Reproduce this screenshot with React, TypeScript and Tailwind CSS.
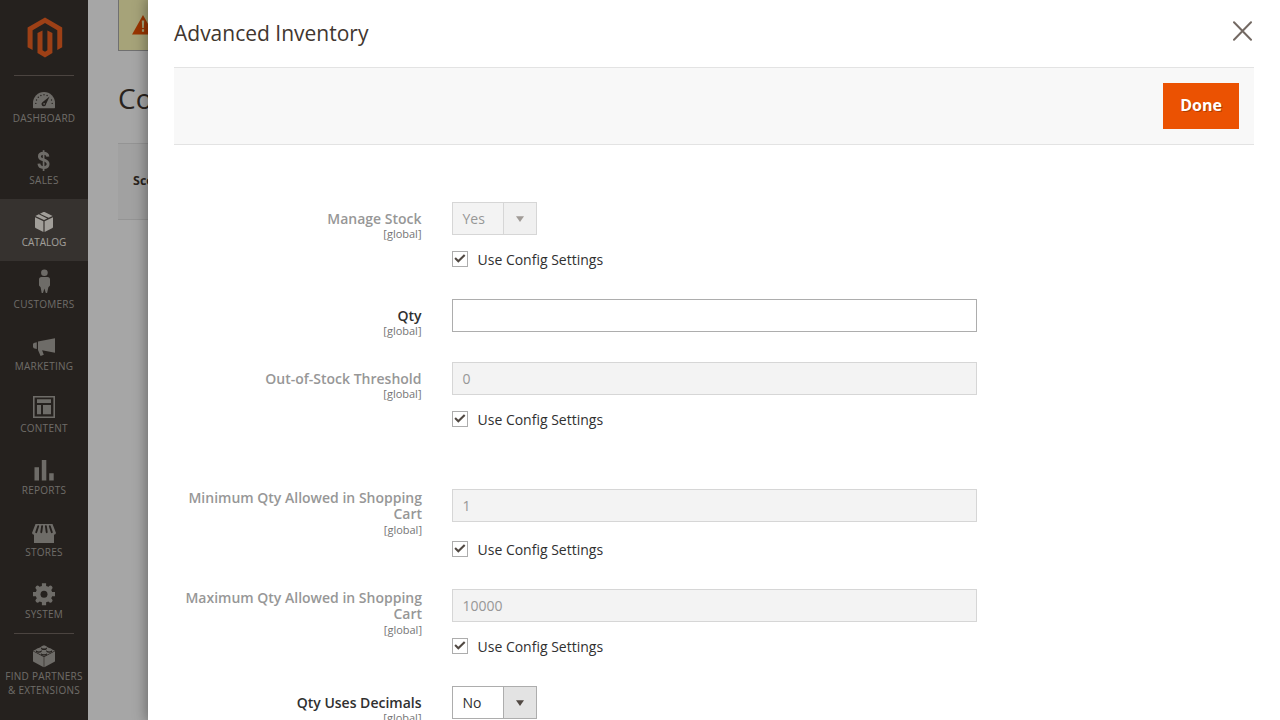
import type { ReactNode } from "react";

type MenuItem = { label: ReactNode; icon: ReactNode; active?: boolean; divided?: boolean };

const menu: MenuItem[] = [
  {
    label: "Dashboard",
    divided: true,
    icon: (
      <>
        <path d="M33 32.6V28a11 11 0 0 1 22 0v4.6q0 .6-.6.6H33.6q-.6 0-.6-.6Z" />
        <g fill="#3a342f">
          <circle cx="35.8" cy="28.4" r=".7" />
          <circle cx="36.5" cy="25" r=".7" />
          <circle cx="38.3" cy="22.3" r=".7" />
          <circle cx="40.9" cy="20.5" r=".7" />
          <circle cx="44" cy="19.8" r=".7" />
          <circle cx="47.1" cy="20.5" r=".7" />
          <circle cx="51.5" cy="25" r=".7" />
          <circle cx="52.2" cy="28.4" r=".7" />
          <path d="M49.6 21.4 46.1 29A2.3 2.3 0 1 1 42.7 27Z" />
        </g>
        <circle cx="44.1" cy="28.9" r=".8" />
      </>
    ),
  },
  {
    label: "Sales",
    icon: (
      <g fill="none" stroke="currentColor">
        <path
          d="M47.9 19.6C47.6 17.3 46.2 16.3 43.6 16.3 41 16.3 39.4 17.4 39.4 19.4 39.4 21.7 41.4 22.3 43.6 22.9 46.1 23.6 48.1 24.3 48.1 27 48.1 29.5 46.2 30.6 43.7 30.6 41 30.6 39.2 29.4 38.9 26.7"
          strokeWidth="2.9"
        />
        <path d="M43.6 13.2V34" strokeWidth="1.7" />
      </g>
    ),
  },
  {
    label: "Catalog",
    active: true,
    icon: (
      <>
        <path d="M35 18.2 43.4 22.2V33L35.5 28.9Q35 28.6 35 28ZM53 18.2 44.6 22.2V33L52.5 28.9Q53 28.6 53 28Z" />
        <path d="M35.4 17 38.8 15.3 47.2 19.4 44 21.1ZM40 14.7 43.4 13Q44 12.8 44.6 13L52.6 17 48.6 18.8Z" />
      </>
    ),
  },
  {
    label: "Customers",
    icon: (
      <>
        <circle cx="44.4" cy="11.7" r="3.3" />
        <path d="M41.5 16H47.5Q50 16 50 18.6V24.5L48.4 26.2 47.1 32H45.8L44.4 27.5 43 32H41.7L40.6 26.2 39 24.5V18.6Q39 16 41.5 16Z" />
      </>
    ),
  },
  {
    label: "Marketing",
    icon: (
      <path d="M55 15.2V29.8L42.1 27.2 43.8 31.8 40.6 33 38 27V18.5ZM36.8 19.2V25.9L33.8 25.2 33 24V21L33.8 19.9Z" />
    ),
  },
  {
    label: "Content",
    icon: (
      <>
        <path d="M33 11H55V33H33ZM34.6 12.6V31.4H53.4V12.6Z" fillRule="evenodd" />
        <path d="M37 14.3H51V18H37ZM37 20H41V29.2H37ZM43 20H51V29.2H43Z" />
      </>
    ),
  },
  {
    label: "Reports",
    icon: <path d="M34.5 20.2H39V33.6H34.5ZM41.8 13H46.3V33.6H41.8ZM49.2 26.2H53.7V33.6H49.2Z" />,
  },
  {
    label: "Stores",
    icon: (
      <>
        <path d="M35.5 15H52.5L56 24Q55.6 25.8 54 25.8V34H34V25.8Q32.4 25.8 32 24Z" />
        <path
          d="M38.2 17.2 36.2 23.2M42.1 17.2 41.3 23.2M45.9 17.2 46.7 23.2M49.8 17.2 51.8 23.2"
          fill="none"
          stroke="#3a342f"
          strokeLinecap="round"
          strokeWidth="1.9"
        />
      </>
    ),
  },
  {
    label: "System",
    icon: (
      <>
        <circle cx="44" cy="23.2" r="8.4" />
        <path
          d="M44 12.2V34.2M33 23.2H55"
          fill="none"
          stroke="currentColor"
          strokeWidth="4.2"
        />
        <path
          d="M37.6 16.8 50.4 29.6M50.4 16.8 37.6 29.6"
          fill="none"
          stroke="currentColor"
          strokeLinecap="round"
          strokeWidth="4.2"
        />
        <circle cx="44" cy="23.2" r="3.5" fill="#3a342f" />
      </>
    ),
  },
  {
    label: (
      <>
        Find Partners
        <br />
        &amp; Extensions
      </>
    ),
    divided: true,
    icon: (
      <>
        <path d="M33 18.3 43.7 23.9V34.2L33.5 28.8Q33 28.5 33 28ZM55 18.3 44.3 23.9V34.2L54.5 28.8Q55 28.5 55 28Z" />
        <path d="M33.2 17.7 44 12.6 54.8 17.7 44 23.3Z" />
        <g fill="#3a342f">
          <ellipse cx="44" cy="15.4" rx="3" ry="1.6" />
          <ellipse cx="38.8" cy="18.1" rx="3" ry="1.6" />
          <ellipse cx="49.2" cy="18.1" rx="3" ry="1.6" />
          <ellipse cx="44" cy="21" rx="3" ry="1.6" />
        </g>
        <ellipse cx="44" cy="14" rx="2.8" ry="1.6" />
        <ellipse cx="38.8" cy="16.8" rx="2.8" ry="1.6" />
        <ellipse cx="49.2" cy="16.8" rx="2.8" ry="1.6" />
        <ellipse cx="44" cy="19.7" rx="2.8" ry="1.6" />
      </>
    ),
  },
];

function Sidebar() {
  return (
    <nav className="h-full w-[88px] shrink-0 bg-[#3a342f]">
      <div className="flex h-[75px] justify-center pt-[17px] pl-px">
        <svg className="h-[41px] w-[36px]" viewBox="0 0 36 41" fill="#f26322">
          <path d="M18 .5 35.2 10.4V30.2L30.3 33V13.2L18 6.1 5.6 13.2V33L.6 30.2V10.4Z" />
          <path d="M15.5 13.4V33.2L18 34.7 20.4 33.2V13.4L25.4 16.1V36L18 40.4 10.5 36V16.1Z" />
        </svg>
      </div>
      {menu.map((item, i) => (
        <div
          key={i}
          className={
            item.active
              ? "relative h-[62px] bg-[#544d49] pt-[6px] text-[#f7f3eb]"
              : "relative h-[62px] pt-[6px] text-[#aaa6a0]"
          }
        >
          {item.divided && <div className="absolute top-0 left-[14px] h-px w-[60px] bg-[#736963]" />}
          <svg className="mx-auto block h-[30px] w-[30px]" viewBox="29 6 30 30" fill="currentColor">
            {item.icon}
          </svg>
          <div
            className={
              item.active
                ? "text-center text-[10px] leading-[14px] whitespace-nowrap uppercase"
                : "text-center text-[10px] leading-[14px] tracking-[0.25px] whitespace-nowrap uppercase"
            }
          >
            {item.label}
          </div>
        </div>
      ))}
    </nav>
  );
}

function PageBehind() {
  return (
    <main className="flex-1 bg-white pl-[30px]">
      <div className="flex h-[51px] items-center border-b border-l border-[#adadad] bg-[#fffbbb] pl-[13px]">
        <svg className="mb-px h-[20px] w-[22px]" viewBox="0 0 22 20">
          <path d="M11 0 22 19.5H0Z" fill="#eb5202" />
          <path d="M9.8 5.5H12.2L11.8 13H10.2ZM9.9 14.3H12.1V16.8H9.9Z" fill="#fffbbb" />
        </svg>
      </div>
      <h1 className="mt-[27px] text-[28px] leading-[40px] whitespace-nowrap text-[#41362f]">Configuration</h1>
      <div className="mt-[25px] flex h-[77px] items-center border-y border-[#e3e3e3] bg-[#f8f8f8] pl-[15px] text-[12.5px] font-bold whitespace-nowrap text-[#41362f]">
        Scope:
      </div>
    </main>
  );
}

function Label({ text, disabled, wrap }: { text: string; disabled?: boolean; wrap?: boolean }) {
  return (
    <div className={wrap ? "w-[248px] pt-px text-right" : "w-[248px] pt-[9px] pr-[0.5px] text-right"}>
      <div
        className={
          disabled
            ? "text-[14px] leading-[16px] font-semibold text-[#979797]"
            : "text-[14px] leading-[16px] font-semibold text-[#303030]"
        }
      >
        {text}
      </div>
      <div
        className={
          wrap ? "text-[11px] leading-[15px] text-[#757575]" : "text-[11px] leading-[13px] text-[#757575]"
        }
      >
        [global]
      </div>
    </div>
  );
}

function TextInput({ value, disabled }: { value?: string; disabled?: boolean }) {
  return (
    <div
      className={
        disabled
          ? "flex h-[33px] w-[525px] items-center border border-[#d6d6d6] bg-[#f3f3f3] px-[9.5px] text-[14px] text-[#979797]"
          : "flex h-[33px] w-[525px] items-center border border-[#adadad] bg-white px-[9.5px] text-[14px] text-[#303030]"
      }
    >
      {value}
    </div>
  );
}

function Select({ value, disabled }: { value: string; disabled?: boolean }) {
  return (
    <div
      className={
        disabled
          ? "flex h-[33px] w-[85px] border border-[#d6d6d6] bg-[#f3f3f3] text-[14px] text-[#979797]"
          : "flex h-[33px] w-[85px] border border-[#adadad] bg-white text-[14px] text-[#303030]"
      }
    >
      <span className="flex flex-1 items-center pl-[9.5px]">{value}</span>
      <span
        className={
          disabled
            ? "flex w-[33px] items-center justify-center border-l border-[#d6d6d6] bg-[#f0f0f0] text-[#a09b97]"
            : "flex w-[33px] items-center justify-center border-l border-[#adadad] bg-[#e3e3e3] text-[#514943]"
        }
      >
        <svg className="mt-px h-[6px] w-[8px]" viewBox="0 0 8 6" fill="currentColor">
          <path d="M0 .2H8L4 6Z" />
        </svg>
      </span>
    </div>
  );
}

function UseConfig() {
  return (
    <div className="flex h-[16px] items-center">
      <span className="flex h-[16px] w-[16px] items-center justify-center border border-[#adadad] bg-white">
        <svg className="h-[14px] w-[14px]" viewBox="0 0 14 14" fill="none" stroke="#514943" strokeWidth="2.1">
          <path d="M2.1 6.1 5.3 9.2 11.7 2.9" />
        </svg>
      </span>
      <span className="pt-[2px] pl-[9.5px] text-[14px] leading-[16px] text-[#303030]">Use Config Settings</span>
    </div>
  );
}

export default function App() {
  return (
    <div className="relative flex h-[720px] w-[1280px] overflow-hidden bg-white font-['Open_Sans',sans-serif]">
      <Sidebar />
      <PageBehind />
      <div className="absolute inset-0 bg-black/35" />
      <section className="absolute inset-y-0 right-0 left-[148px] overflow-hidden bg-white px-[26px] shadow-[0_0_12px_2px_rgba(0,0,0,0.35)]">
        <header className="flex h-[67px] justify-between">
          <h2 className="pt-[18px] text-[21px] leading-[30px] text-[#41362f]">Advanced Inventory</h2>
          <svg
            className="mt-[21px] mr-[1px] h-[20px] w-[20px]"
            viewBox="0 0 20 20"
            fill="none"
            stroke="#736963"
            strokeLinecap="round"
            strokeWidth="2"
          >
            <path d="M1 1.3 18 18.7M18 1.3 1 18.7" />
          </svg>
        </header>
        <div className="flex h-[78px] items-center justify-end border-y border-[#e3e3e3] bg-[#f8f8f8] pr-[15px]">
          <button className="h-[46px] w-[76px] bg-[#eb5202] pb-[2px] text-[16px] font-bold text-white [text-shadow:1px_1px_0_rgba(0,0,0,0.25)]">
            Done
          </button>
        </div>
        <div className="pt-[57px]">
          <div className="flex h-[97px] gap-[30px]">
            <Label text="Manage Stock" disabled />
            <div className="flex flex-col gap-[16px]">
              <Select value="Yes" disabled />
              <UseConfig />
            </div>
          </div>
          <div className="flex h-[63px] gap-[30px]">
            <Label text="Qty" />
            <TextInput />
          </div>
          <div className="flex h-[127px] gap-[30px]">
            <Label text="Out-of-Stock Threshold" disabled />
            <div className="flex flex-col gap-[16px]">
              <TextInput value="0" disabled />
              <UseConfig />
            </div>
          </div>
          <div className="flex h-[100px] gap-[30px]">
            <Label text="Minimum Qty Allowed in Shopping Cart" disabled wrap />
            <div className="flex flex-col gap-[19px]">
              <TextInput value="1" disabled />
              <UseConfig />
            </div>
          </div>
          <div className="flex h-[97px] gap-[30px]">
            <Label text="Maximum Qty Allowed in Shopping Cart" disabled wrap />
            <div className="flex flex-col gap-[16px]">
              <TextInput value="10000" disabled />
              <UseConfig />
            </div>
          </div>
          <div className="flex gap-[30px]">
            <Label text="Qty Uses Decimals" />
            <Select value="No" />
          </div>
        </div>
      </section>
    </div>
  );
}
